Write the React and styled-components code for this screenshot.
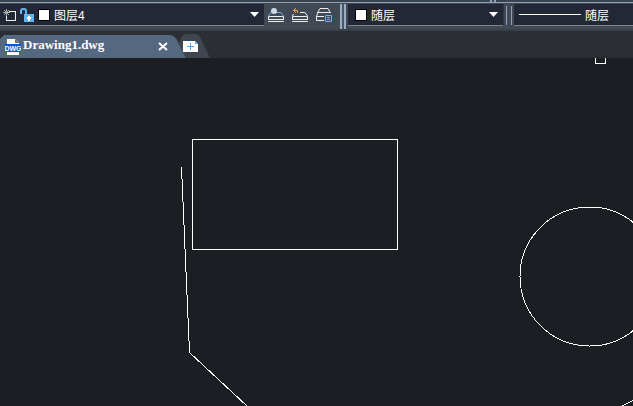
import React, { useState } from 'react';
import styled, { createGlobalStyle } from 'styled-components';

const GlobalStyle = createGlobalStyle`
  * {
    box-sizing: border-box;
  }

  body {
    margin: 0;
    background-color: #1b1e23;
    color: #ffffff;
    font-family: 'Liberation Sans', 'Noto Sans CJK SC', sans-serif;
    font-size: 12px;
    overflow: hidden;
  }
`;

const Page = styled.div`
  display: flex;
  flex-direction: column;
  height: 100vh;
`;

const TopEdge = styled.div`
  flex: none;
  height: 3px;
  padding-left: 490px;
  background-color: #3a424e;
  border-bottom: 1px solid #8fa1b9;
`;

const EdgeMark = styled.div`
  width: 6px;
  height: 2px;
  border: solid #8fa1b9;
  border-width: 0 2px;
`;

const Toolbar = styled.header`
  flex: none;
  display: flex;
  height: 28px;
  padding-top: 1px;
  background-color: #414955;
  border-bottom: 2px solid #37404b;
`;

const Field = styled.div`
  display: flex;
  align-items: center;
  flex: ${props => props.$grow ? '1 0 auto' : 'none'};
  width: ${props => props.$width || 'auto'};
  height: 22px;
  padding-left: ${props => props.$inset || '3px'};
  gap: 4px;
  background-color: #222835;
  border-bottom: 1px solid #7d828c;
`;

const IconButton = styled.button`
  display: flex;
  flex: none;
  padding: 0;
  border: none;
  background: none;
  color: white;
  cursor: pointer;
`;

const Swatch = styled.span`
  flex: none;
  width: 12px;
  height: 12px;
  background-color: white;
  border: 1px solid #000000;
`;

const Picker = styled.div`
  position: relative;
  display: flex;
  flex: 1;
  align-items: center;
  min-width: 0;
`;

const Select = styled.select`
  appearance: none;
  flex: 1;
  min-width: 0;
  height: 20px;
  padding: 2px 0 0;
  border: none;
  background: none;
  color: white;
  font: inherit;
  cursor: pointer;
`;

const Caret = styled.svg`
  position: absolute;
  right: 5px;
  pointer-events: none;
`;

const LayerTools = styled.div`
  display: flex;
  align-items: center;
  gap: 8px;
  height: 22px;
  padding: 0 8px 0 4px;
`;

const Divider = styled.div`
  width: 6px;
  margin-right: 2px;
  border: solid #9badc4;
  border-width: 0 2px;
  background-color: #4b5563;
`;

const Grip = styled.div`
  width: 9px;
  height: 22px;
  margin-right: 2px;
  padding: 2px 2px 1px;
  border: solid #303743;
  border-width: 0 1px;

  &::before {
    content: '';
    display: block;
    width: 4px;
    height: 100%;
    border: solid #8fa1b9;
    border-width: 0 1px;
  }
`;

const LineSample = styled.span`
  flex: none;
  width: 62px;
  height: 1px;
  background-color: white;
`;

const TabStrip = styled.nav`
  flex: none;
  display: flex;
  align-items: flex-end;
  height: 27px;
  background-color: #2b2f34;
`;

const Tab = styled.div`
  display: flex;
  align-items: center;
  width: 186px;
  height: 23px;
  padding: 0 18px 0 5px;
  background-color: #546880;
  clip-path: path('M0 4 L4 0 H170 Q175 1 177 5 L186 23 H0 Z');
`;

const TabLink = styled.a`
  display: flex;
  flex: 1;
  align-items: center;
  gap: 2px;
  color: white;
  font: bold 13px/16px 'Liberation Serif', serif;
  text-decoration: none;
`;

const TabName = styled.span`
  padding-bottom: 4px;
`;

const NewTab = styled.button`
  display: flex;
  align-items: flex-start;
  width: 32px;
  height: 24px;
  margin-left: -8px;
  padding: 7px 0 0 5px;
  border: none;
  background-color: #3f4650;
  clip-path: path('M3 4 Q5 0 9 0 H17 Q21 0 23 5 L32 24 H8 L1 10 Z');
  cursor: pointer;
`;

const Canvas = styled.main`
  position: relative;
  flex: 1;
  min-height: 0;
  overflow: hidden;
`;

const Drawing = styled.svg`
  position: absolute;
  top: 0;
  left: 0;
  width: 100%;
  height: 100%;
`;

const FreezeIcon = () => (
  <svg width="13" height="12" viewBox="0 0 13 12" shapeRendering="crispEdges" aria-hidden="true">
    <path d="M6 2.5h6.500v9h-9V6" fill="none" stroke="#f0f0f0" />
    <path d="M3.500 0v7M0 3.500h7M1 1l5 5M6 1L1 6" fill="none" stroke="#a8aaa8" />
  </svg>
);

const UnlockIcon = () => (
  <svg width="14" height="14" viewBox="0 0 14 14" aria-hidden="true">
    <path d="M1 6V3q0-2 2-2h1q2 0 2 2v4" fill="none" stroke="#62b5f5" strokeWidth="2" />
    <path d="M4 6h10v8H4z" fill="#62b5f5" />
    <path d="M8 8h2v1h1v2h-1v2H8v-2H7V9h1z" fill="#ffffff" />
  </svg>
);

const StackBase = () => (
  <path d="M0.500 13V9.500h15V13M0.500 12.500h15M0.500 15v-0.500h15v0.500" fill="none" stroke="#eeeeee" />
);

const CurrentLayerIcon = () => (
  <svg width="16" height="16" viewBox="0 0 16 16" aria-hidden="true">
    <path d="M0.500 9L3 5.500h10L15.500 9" fill="none" stroke="#75afe0" />
    <StackBase />
    <circle cx="6" cy="4" r="3" fill="#cbd8e8" />
  </svg>
);

const PreviousLayerIcon = () => (
  <svg width="16" height="16" viewBox="0 0 16 16" aria-hidden="true">
    <path d="M0.500 9l1-2M8 5.500h5L15.500 9" fill="none" stroke="#eeeeee" />
    <StackBase />
    <path d="M4 1L1.500 3.500L4 6M2 3.500h3.500V6" fill="none" stroke="#e8ac45" />
  </svg>
);

const LayerStateIcon = () => (
  <svg width="16" height="16" viewBox="0 0 16 16" aria-hidden="true">
    <path d="M1.500 6L4 1.500h8L14.500 6M1.500 5.500h13M0.500 10L1.500 6M0.500 9.500H8M0.500 10v3.500H8" fill="none" stroke="#eeeeee" />
    <path d="M9.500 8.500h6v6h-6zM11 10.500h3M11 12.500h3" fill="none" stroke="#69b4ed" />
  </svg>
);

const DwgIcon = () => (
  <svg width="16" height="17" viewBox="0 0 16 17" aria-hidden="true">
    <path d="M2 1h8l4 4v12H2z" fill="#ffffff" />
    <path d="M10 1v4h4z" fill="#6c7078" />
    <path d="M0 6h16v8H0z" fill="#0757d8" />
    <text x="8" y="12.500" fill="#ffffff" textAnchor="middle" fontFamily="Liberation Sans, sans-serif" fontSize="7">DWG</text>
  </svg>
);

const CloseIcon = () => (
  <svg width="10" height="9" viewBox="0 0 10 9" aria-hidden="true">
    <path d="M1 1l8 7M9 1L1 8" stroke="#ffffff" strokeWidth="2" />
  </svg>
);

const NewFileIcon = () => (
  <svg width="15" height="11" viewBox="0 0 15 11" shapeRendering="crispEdges" aria-hidden="true">
    <path d="M0 0h12v3h3v8H0z" fill="#ffffff" />
    <path d="M12 0l3 3h-3z" fill="#62b5f5" />
    <path d="M7.500 2v7M4 5.500h7" stroke="#45a6f2" />
  </svg>
);

const ValuePicker = ({ label, options, caret = true }) => {
  const [value, setValue] = useState(options[0]);

  return (
    <Picker>
      <Select aria-label={label} value={value} onChange={e => setValue(e.target.value)}>
        {options.map(option => (
          <option key={option}>{option}</option>
        ))}
      </Select>
      {caret && (
        <Caret width="9" height="5" viewBox="0 0 9 5" aria-hidden="true">
          <path d="M0 0h9L4.500 5z" fill="#ffffff" />
        </Caret>
      )}
    </Picker>
  );
};

const App = () => {
  return (
    <Page>
      <GlobalStyle />
      <TopEdge>
        <EdgeMark />
      </TopEdge>

      <Toolbar>
        <Field $width="264px">
          <IconButton aria-label="冻结"><FreezeIcon /></IconButton>
          <IconButton aria-label="锁定"><UnlockIcon /></IconButton>
          <Swatch />
          <ValuePicker label="图层" options={['图层4']} />
        </Field>
        <LayerTools>
          <IconButton aria-label="置为当前"><CurrentLayerIcon /></IconButton>
          <IconButton aria-label="上一个图层"><PreviousLayerIcon /></IconButton>
          <IconButton aria-label="图层状态"><LayerStateIcon /></IconButton>
        </LayerTools>
        <Divider />
        <Field $width="155px" $inset="7px">
          <Swatch />
          <ValuePicker label="颜色" options={['随层']} />
        </Field>
        <Grip />
        <Field $grow $inset="5px">
          <LineSample />
          <ValuePicker label="线型" options={['随层']} caret={false} />
        </Field>
      </Toolbar>

      <TabStrip>
        <Tab>
          <TabLink href="#drawing1">
            <DwgIcon />
            <TabName>Drawing1.dwg</TabName>
          </TabLink>
          <IconButton aria-label="关闭"><CloseIcon /></IconButton>
        </Tab>
        <NewTab aria-label="新建"><NewFileIcon /></NewTab>
      </TabStrip>

      <Canvas>
        <Drawing fill="none" stroke="#ffffff" shapeRendering="crispEdges">
          <path d="M595.500 0v5.500h10V0" />
          <rect x="192.500" y="81.500" width="205" height="110" />
          <path d="M181.500 109L189.500 294.500L247 348" />
          <circle cx="589.500" cy="218.500" r="69.500" />
          <path d="M622 348L634 342" />
        </Drawing>
      </Canvas>
    </Page>
  );
};

export default App;
